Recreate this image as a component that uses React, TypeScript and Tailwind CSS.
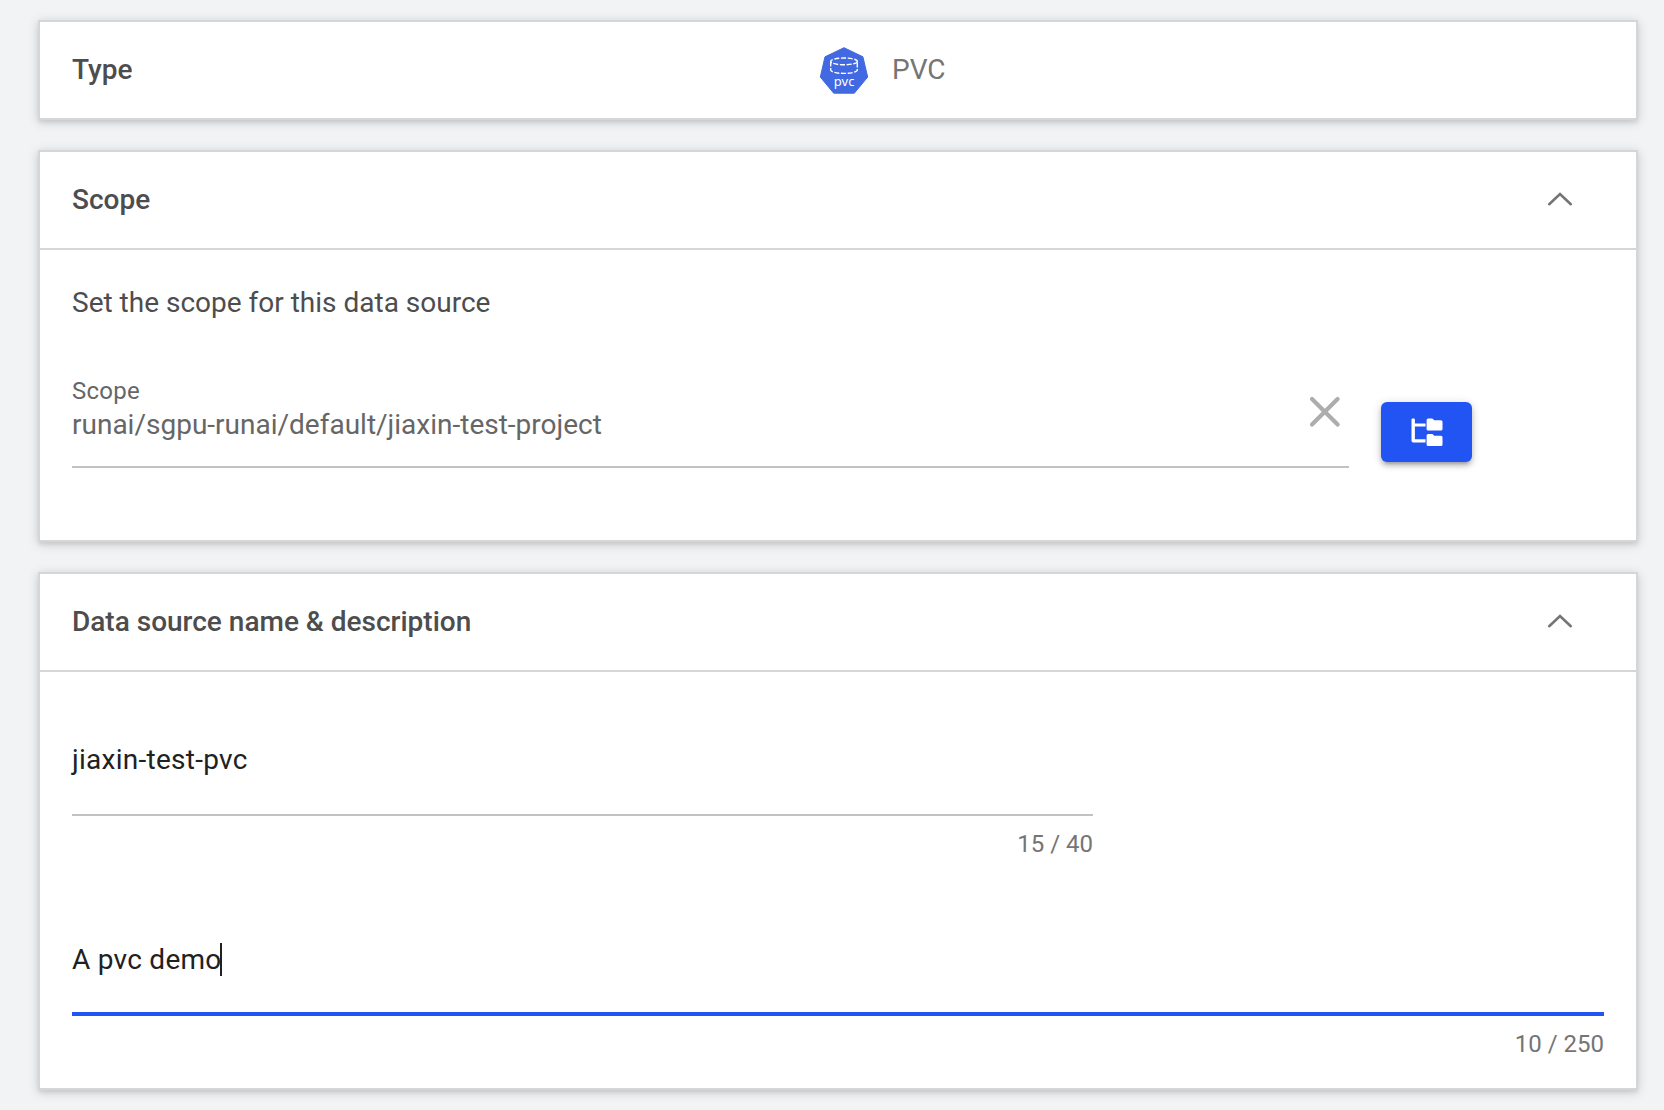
import React from "react";

const CARD =
  "w-[1600px] border-2 border-[#d4d6d7] bg-white shadow-[0_2px_10px_rgba(0,0,0,0.18),0_3px_3px_rgba(0,0,0,0.05)]";

function PvcIcon() {
  return (
    <svg width="50" height="50" viewBox="0 0 50 50" className="mt-[1px] shrink-0">
      <path
        d="M25 1.7 L43.9 10.8 L48.7 31.1 L35.3 47.2 H14.7 L1.3 31.1 L6 10.8 Z"
        fill="#4169e1"
        stroke="#4169e1"
        strokeWidth="1"
        strokeLinejoin="round"
      />
      <g fill="none" stroke="#fff" strokeWidth="1.4">
        <ellipse cx="25" cy="15.4" rx="13.3" ry="3.4" strokeDasharray="5 1.6" />
        <path d="M11.7 15.4 V24 C11.7 25.9 17.6 27.4 25 27.4 S38.3 25.9 38.3 24 V15.4" strokeDasharray="5 1.6" />
      </g>
      <text
        x="25.1"
        y="40"
        textAnchor="middle"
        fontFamily="Noto Sans, sans-serif"
        fontSize="13"
        letterSpacing="0.1"
        fill="#fff"
      >
        pvc
      </text>
    </svg>
  );
}

function ChevronUp() {
  return (
    <svg width="28" height="18" viewBox="0 0 28 18" fill="none" stroke="#757575" strokeWidth="2.6">
      <path d="M3.2 14.2 L14 4 L24.8 14.2" strokeLinecap="round" />
    </svg>
  );
}

function CloseIcon() {
  return (
    <svg width="32" height="32" viewBox="0 0 32 32" fill="none" stroke="#adadad" strokeWidth="4.2" strokeLinecap="round">
      <path d="M3 3 L28.6 28.6 M28.6 3 L3 28.6" />
    </svg>
  );
}

function FolderTreeIcon() {
  return (
    <svg width="32" height="30" viewBox="0 0 32 30" fill="#fff">
      <path d="M0.5 1.5 a1 1 0 0 1 1-1 h1.4 a1 1 0 0 1 1 1 V5.4 H14.5 V8.6 H3.9 V21.3 H14.5 V24.5 H2.2 A1.7 1.7 0 0 1 0.5 22.8 Z" />
      <path d="M15.6 2 A1.5 1.5 0 0 1 17.1 0.5 H21.3 L23.3 2.2 H30 A1.5 1.5 0 0 1 31.5 3.7 V11 A1.5 1.5 0 0 1 30 12.5 H17.1 A1.5 1.5 0 0 1 15.6 11 Z" />
      <path d="M15.6 17.6 A1.5 1.5 0 0 1 17.1 16.1 H21.3 L23.3 17.8 H30 A1.5 1.5 0 0 1 31.5 19.3 V26.6 A1.5 1.5 0 0 1 30 28.1 H17.1 A1.5 1.5 0 0 1 15.6 26.6 Z" />
    </svg>
  );
}

function CardHeader({ title }: { title: string }) {
  return (
    <header className="flex h-[98px] items-center justify-between border-b-2 border-[#d4d6d7] pr-[62.5px] pl-8">
      <h2 className="text-[28px] leading-10 font-medium">{title}</h2>
      <button aria-label={`Collapse ${title}`} className="mb-[2px]">
        <ChevronUp />
      </button>
    </header>
  );
}

export default function App() {
  return (
    <main className="flex h-[1110px] w-[1664px] flex-col gap-[30px] overflow-hidden bg-[#f1f3f5] pt-5 pl-[38px] font-['Roboto',sans-serif] text-[28px] leading-10 text-[#4d4d4d]">
      <section className={`${CARD} flex h-[100px] shrink-0 items-center pl-8`}>
        <h2 className="w-[747px] font-medium">Type</h2>
        <PvcIcon />
        <span className="pl-[23px] text-[#757575]">PVC</span>
      </section>

      <section className={`${CARD} h-[392px] shrink-0`}>
        <CardHeader title="Scope" />
        <div className="px-8 pt-[33px]">
          <p>Set the scope for this data source</p>
          <div className="mt-[49px] flex">
            <div className="flex h-24 w-[1277px] justify-between border-b-2 border-[#c2c2c2] pr-2">
              <div className="pt-[3px] text-[#666666]">
                <div className="text-2xl leading-8 tracking-[0.0094em]">Scope</div>
                <div className="leading-9">runai/sgpu-runai/default/jiaxin-test-project</div>
              </div>
              <button aria-label="Clear scope" className="mt-6 self-start">
                <CloseIcon />
              </button>
            </div>
            <button
              aria-label="Select scope"
              className="mt-[30px] ml-8 flex h-[60px] w-[91px] items-center justify-center rounded-md bg-[#2254f4] pt-[1px] shadow-[0_2px_10px_rgba(0,0,0,0.2),0_4px_4px_rgba(0,0,0,0.14),0_6px_2px_-4px_rgba(0,0,0,0.12)]"
            >
              <FolderTreeIcon />
            </button>
          </div>
        </div>
      </section>

      <section className={`${CARD} h-[518px] shrink-0`}>
        <CardHeader title="Data source name & description" />
        <div className="px-8 pt-[68px] text-[#212121]">
          <div className="w-[1021px]">
            <div className="h-[76px] border-b-2 border-[#c2c2c2] tracking-[0.0094em]">jiaxin-test-pvc</div>
            <div className="pt-2 text-right text-2xl leading-10 text-[#757575]">15 / 40</div>
          </div>
          <div className="pt-[76px]">
            <div className="flex h-[76px] border-b-4 border-[#2254f4]">
              <span className="tracking-[0.0094em]">A pvc demo</span>
              <span className="mt-[3px] -ml-[2px] h-[33px] w-[2px] bg-[#212121]" />
            </div>
            <div className="pt-2 text-right text-2xl leading-10 text-[#757575]">10 / 250</div>
          </div>
        </div>
      </section>
    </main>
  );
}
